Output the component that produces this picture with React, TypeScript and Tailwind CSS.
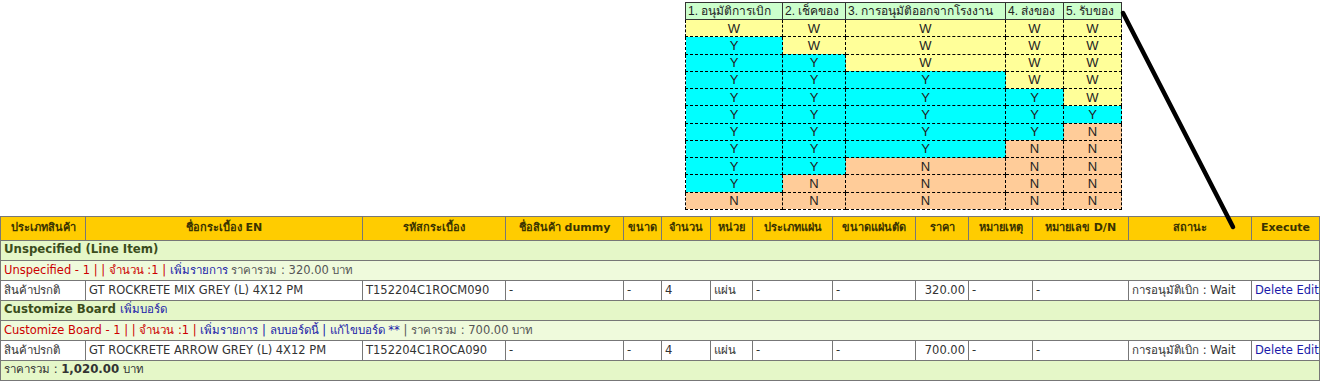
import React from "react";

type Cell = "W" | "Y" | "N";

const legendHead = ["1. อนุมัติการเบิก", "2. เช็คของ", "3. การอนุมัติออกจากโรงงาน", "4. ส่งของ", "5. รับของ"];
const legendRows: Cell[][] = [
  ["W", "W", "W", "W", "W"],
  ["Y", "W", "W", "W", "W"],
  ["Y", "Y", "W", "W", "W"],
  ["Y", "Y", "Y", "W", "W"],
  ["Y", "Y", "Y", "Y", "W"],
  ["Y", "Y", "Y", "Y", "Y"],
  ["Y", "Y", "Y", "Y", "N"],
  ["Y", "Y", "Y", "N", "N"],
  ["Y", "Y", "N", "N", "N"],
  ["Y", "N", "N", "N", "N"],
  ["N", "N", "N", "N", "N"],
];
const legendCols = ["w-[97px]", "w-[63px]", "w-[160px]", "w-[58px]", "w-[58px]"];
const cellBg: Record<Cell, string> = { W: "bg-[#ffff99]", Y: "bg-[#00ffff]", N: "bg-[#ffcc99]" };

const cols = [
  { label: "ประเภทสินค้า", w: "w-[85px]" },
  { label: "ชื่อกระเบื้อง EN", w: "w-[277px]" },
  { label: "รหัสกระเบื้อง", w: "w-[143px]" },
  { label: "ชื่อสินค้า dummy", w: "w-[118px]" },
  { label: "ขนาด", w: "w-[38px]" },
  { label: "จำนวน", w: "w-[49px]" },
  { label: "หน่วย", w: "w-[42px]" },
  { label: "ประเภทแผ่น", w: "w-[80px]" },
  { label: "ขนาดแผ่นตัด", w: "w-[83px]" },
  { label: "ราคา", w: "w-[53px]" },
  { label: "หมายเหตุ", w: "w-[64px]" },
  { label: "หมายเลข D/N", w: "w-[96px]" },
  { label: "สถานะ", w: "w-[123px]" },
  { label: "Execute", w: "w-[68px]" },
];

const td = "border border-[#777] px-[3px] h-[20px] whitespace-nowrap overflow-hidden";

const ItemRow = ({ name, code, price }: { name: string; code: string; price: string }) => (
  <tr className="bg-white text-[#333]">
    <td className={td}>สินค้าปรกติ</td>
    <td className={td}>{name}</td>
    <td className={td}>{code}</td>
    <td className={td}>-</td>
    <td className={td}>-</td>
    <td className={td}>4</td>
    <td className={td}>แผ่น</td>
    <td className={td}>-</td>
    <td className={td}>-</td>
    <td className={`${td} text-right`}>{price}</td>
    <td className={td}>-</td>
    <td className={td}>-</td>
    <td className={td}>การอนุมัติเบิก : Wait</td>
    <td className={`${td} text-[#1a1aa8]`}>Delete Edit</td>
  </tr>
);

export default function App() {
  return (
    <div className="relative w-[1323px] h-[392px] bg-white overflow-hidden">
      <div className="pt-[2px] pl-[685px]">
        <table className="w-[436px] table-fixed border-collapse text-[13px] text-[#222] font-['Liberation_Sans',Arial,sans-serif]">
          <colgroup>
            {legendCols.map((w, i) => (
              <col key={i} className={w} />
            ))}
          </colgroup>
          <thead>
            <tr className="h-[17px] bg-[#ccffcc]">
              {legendHead.map((h) => (
                <th key={h} className="border border-[#333] px-[2px] text-[12px] font-normal text-left whitespace-nowrap overflow-hidden leading-[15px]">
                  {h}
                </th>
              ))}
            </tr>
          </thead>
          <tbody>
            {legendRows.map((r, i) => (
              <tr key={i} className="h-[17.25px]">
                {r.map((c, j) => (
                  <td key={j} className={`border border-dashed border-black text-center leading-[15px] ${cellBg[c]}`}>
                    {c}
                  </td>
                ))}
              </tr>
            ))}
          </tbody>
        </table>
      </div>

      <table className="mt-[6px] w-[1319px] table-fixed border-collapse text-[11.5px] font-['DejaVu_Sans',Verdana,sans-serif]">
        <colgroup>
          {cols.map((c) => (
            <col key={c.label} className={c.w} />
          ))}
        </colgroup>
        <thead>
          <tr className="h-[24px] bg-[#ffcc00] text-[#3a3300]">
            {cols.map((c) => (
              <th key={c.label} className="border border-[#777] text-[11px] font-bold text-center whitespace-nowrap overflow-hidden px-[2px]">
                {c.label}
              </th>
            ))}
          </tr>
        </thead>
        <tbody>
          <tr className="bg-[#e5f7c8]">
            <td colSpan={14} className={`${td} font-bold text-[11.75px] text-[#3b4d1c]`}>
              Unspecified (Line Item)
            </td>
          </tr>
          <tr className="bg-[#effadc]">
            <td colSpan={14} className={`${td} text-[#555]`}>
              <span className="text-[#cc0000]">Unspecified - 1 | | จำนวน :1 | </span>
              <span className="text-[#1a1aa8]">เพิ่มรายการ</span> ราคารวม : 320.00 บาท
            </td>
          </tr>
          <ItemRow name="GT ROCKRETE MIX GREY (L) 4X12 PM" code="T152204C1ROCM090" price="320.00" />
          <tr className="bg-[#e5f7c8]">
            <td colSpan={14} className={`${td} text-[#3b4d1c]`}>
              <span className="font-bold text-[11.75px]">Customize Board</span>{" "}
              <span className="text-[#1a1aa8]">เพิ่มบอร์ด</span>
            </td>
          </tr>
          <tr className="bg-[#effadc]">
            <td colSpan={14} className={`${td} text-[#555]`}>
              <span className="text-[#cc0000]">Customize Board - 1 | | จำนวน :1 | </span>
              <span className="text-[#1a1aa8]">เพิ่มรายการ | ลบบอร์ดนี้ | แก้ไขบอร์ด ** </span>| ราคารวม : 700.00 บาท
            </td>
          </tr>
          <ItemRow name="GT ROCKRETE ARROW GREY (L) 4X12 PM" code="T152204C1ROCA090" price="700.00" />
          <tr className="bg-[#e5f7c8]">
            <td colSpan={14} className={`${td} text-[#333]`}>
              ราคารวม : <span className="font-bold text-[11.75px]">1,020.00</span> บาท
            </td>
          </tr>
        </tbody>
      </table>

      <svg className="absolute left-0 top-0 pointer-events-none" width="1323" height="392">
        <line x1="1123" y1="13" x2="1233" y2="227" stroke="#000" strokeWidth="4.5" strokeLinecap="round" />
      </svg>
    </div>
  );
}
